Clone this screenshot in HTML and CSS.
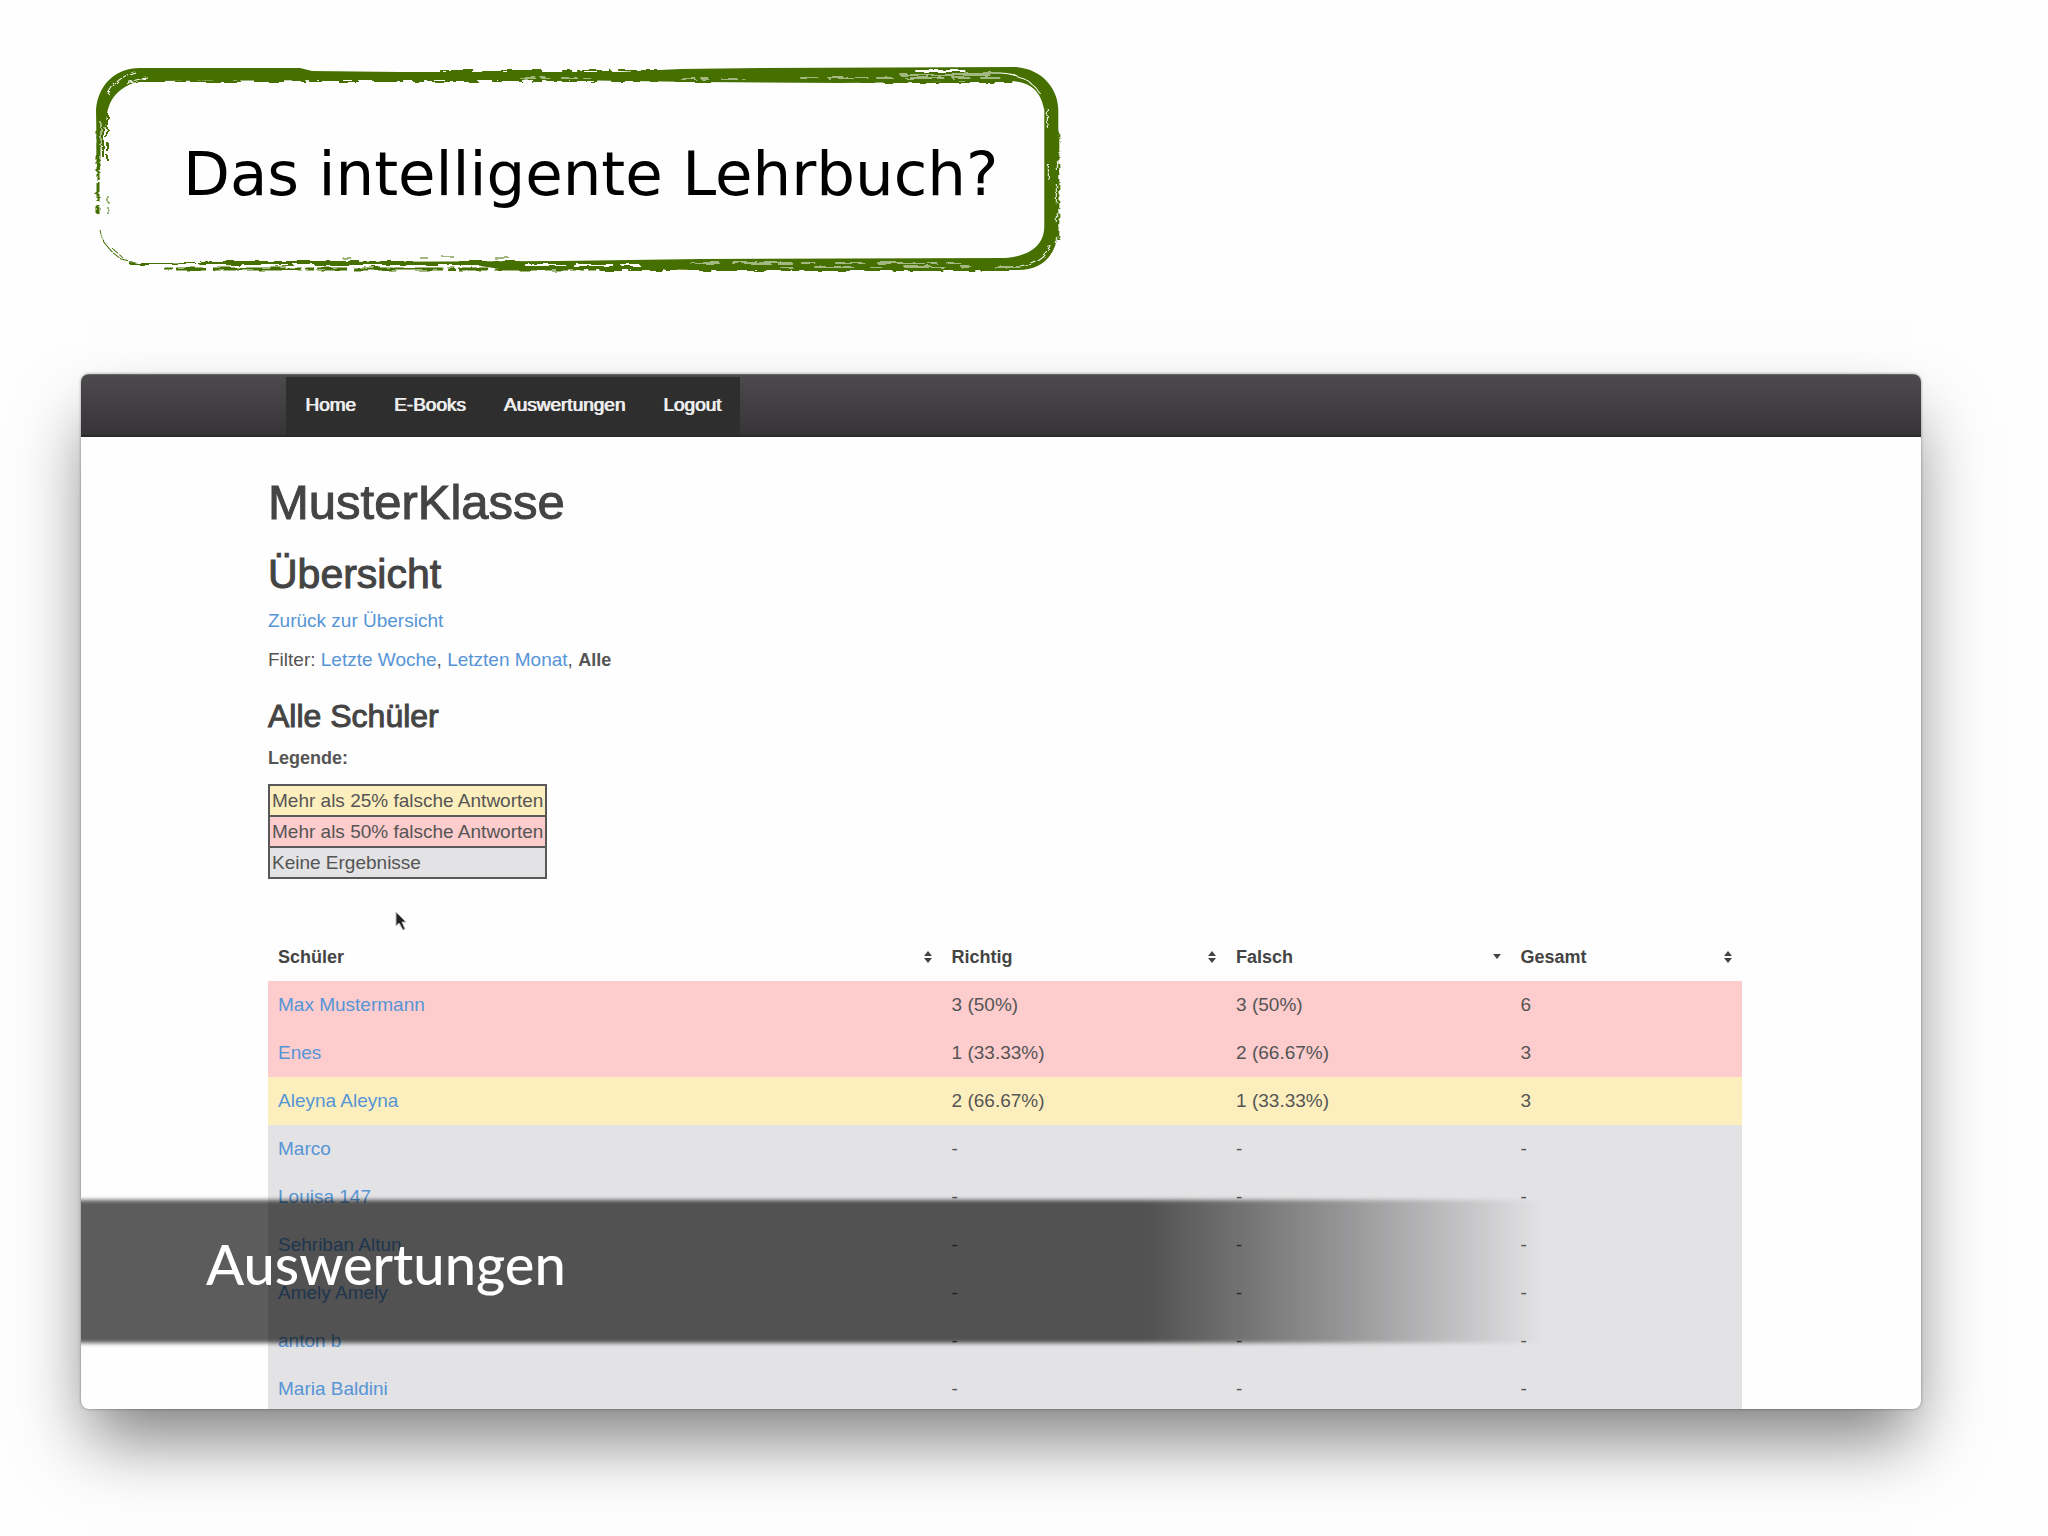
FILE: index.html
```html
<!DOCTYPE html>
<html lang="de">
<head>
  <meta charset="UTF-8">
  <meta name="viewport" content="width=device-width, initial-scale=1.0">
  <title>Das intelligente Lehrbuch?</title>
  <link rel="stylesheet" href="styles.css">
</head>
<body>
  <div class="slide">
    <!-- Slide title with brush frame -->
    <header class="title-box">
      <svg class="brush" viewBox="90 60 980 220" preserveAspectRatio="none" aria-hidden="true">
        <defs>
          <filter id="rough" x="-2%" y="-5%" width="104%" height="110%">
            <feTurbulence type="fractalNoise" baseFrequency="0.06 0.25" numOctaves="3" seed="4" result="noise"/>
            <feDisplacementMap in="SourceGraphic" in2="noise" scale="5"/>
          </filter>
        </defs>
        <path fill="#457000" d="M97 170 L96 110 C98 85 115 68 140 68 L300 68 L312 71 L400 72 L620 72 L680 69 L760 68 L1015 67 C1043 69 1058 90 1058 110 L1058 234 C1054 258 1040 270 1018 270 L700 270 L640 269 L500 269 L480 266 L300 266 L140 264 L200 263 L320 262 L560 261 L700 259 L1005 258 C1030 256 1044 245 1044 226 L1044 110 C1040 90 1030 82 1010 81 L840 83 L700 82 L560 80 L340 80 L140 81 C120 86 109 98 107 115 L105 130 L102 140 L100 170 Z"/>
        <g filter="url(#rough)" fill="none" stroke="#457000">
          <path stroke-width="2" d="M135 81 H720" stroke-dasharray="30 9 12 4 50 14"/>
          <path stroke-width="2" d="M440 71 H1010" stroke-dasharray="34 8 60 20 10 5"/>
          <path stroke-width="2" d="M860 82 H1012"/>
          <path stroke-width="3" d="M98 130 V214" stroke-dasharray="50 2 20 3"/>
          <path stroke-width="2" d="M103 125 V158 M107 105 V160" stroke-dasharray="34 3 9 4"/>
          <path stroke-width="1" d="M108 196 V218" stroke-dasharray="7 4"/>
          <path stroke-width="1" d="M100 230 C103 246 112 252 122 260 L140 264 M112 248 L123 258" stroke-dasharray="8 2 16 1"/>
          <path stroke-width="3" d="M165 269 H620" stroke-dasharray="8 3 30 6 90 4"/>
          <path stroke-width="2" d="M130 264 H700 M200 262 H520"/>
          <path stroke-width="2" d="M600 270 H1010" stroke-dasharray="22 6 50 10"/>
          <path stroke-width="1" d="M342 258 h9 M420 258 h8 M442 257 h12 M494 258 h16"/>
          <path stroke-width="2" d="M1058 130 V240" stroke-dasharray="30 3 12 4"/>
        </g>
        <g filter="url(#rough)" fill="none" stroke="#fff">
          <path stroke-width="1" d="M108 94 C113 84 121 76 135 72"/>
          <path stroke-width="1" d="M127 84 C131 80 138 79 148 78 M101 122 V168 M105 128 V150"/>
          <path stroke-width="1" d="M520 78 H600 M680 79 H745" stroke-dasharray="16 5 8 12"/>
          <path stroke-width="1" d="M800 78 H1000" stroke-dasharray="18 10 40 8"/>
          <path stroke-width="2" d="M915 71 H965"/>
          <path stroke-width="1" d="M965 73 H1000 C1020 74 1033 82 1040 94"/>
          <path stroke-width="1" d="M900 75 H990 M1047 108 V128 M1048 164 V180"/>
          <path stroke-width="1" d="M1056 160 V250" stroke-dasharray="10 14 20 8"/>
          <path stroke-width="1" d="M1050 245 C1044 258 1032 264 1020 266"/>
          <path stroke-width="2" d="M150 265 H330 M350 266 H480" stroke-dasharray="50 6 20 12"/>
          <path stroke-width="2" d="M525 265 H640" stroke-dasharray="40 8"/>
          <path stroke-width="1" d="M690 263 H960" stroke-dasharray="30 12 60 9 14 20"/>
          <path stroke-width="1" d="M780 267 H1020" stroke-dasharray="12 22 40 16"/>
        </g>
      </svg>
      <h1 class="title">Das intelligente Lehrbuch?</h1>
    </header>

    <!-- App window -->
    <main class="window">
      <nav class="navbar">
        <ul class="nav">
          <li><a href="#">Home</a></li>
          <li><a href="#">E-Books</a></li>
          <li><a href="#">Auswertungen</a></li>
          <li><a href="#">Logout</a></li>
        </ul>
      </nav>

      <div class="content">
        <h2>MusterKlasse</h2>
        <h3>Übersicht</h3>
        <p class="back"><a href="#">Zurück zur Übersicht</a></p>
        <p class="filter">Filter: <a href="#">Letzte Woche</a>, <a href="#">Letzten Monat</a>, <b>Alle</b></p>

        <h4>Alle Schüler</h4>
        <p class="legend-label"><b>Legende:</b></p>
        <table class="legend">
          <tr class="warning"><td>Mehr als 25% falsche Antworten</td></tr>
          <tr class="danger"><td>Mehr als 50% falsche Antworten</td></tr>
          <tr class="empty"><td>Keine Ergebnisse</td></tr>
        </table>

        <div class="results">
          <svg class="cursor" viewBox="0 0 12 20" aria-hidden="true">
            <path d="M1 1 L1 15 L4 12 L8 19 L10 18 L7 11 L11 11 Z" fill="#222" stroke="#bbb" stroke-width="1"/>
          </svg>
          <table class="students">
            <thead>
              <tr>
                <th class="col-name"><div class="head">Schüler<svg class="sort" viewBox="0 0 8 12"><path d="M0 5 L4 0 L8 5 Z M0 7 L4 12 L8 7 Z"/></svg></div></th>
                <th class="col-num"><div class="head">Richtig<svg class="sort" viewBox="0 0 8 12"><path d="M0 5 L4 0 L8 5 Z M0 7 L4 12 L8 7 Z"/></svg></div></th>
                <th class="col-num"><div class="head">Falsch<svg class="sort" viewBox="0 0 8 12"><path d="M0 3 L8 3 L4 8 Z"/></svg></div></th>
                <th><div class="head">Gesamt<svg class="sort" viewBox="0 0 8 12"><path d="M0 5 L4 0 L8 5 Z M0 7 L4 12 L8 7 Z"/></svg></div></th>
              </tr>
            </thead>
            <tbody>
              <tr class="danger"><td><a href="#">Max Mustermann</a></td><td>3 (50%)</td><td>3 (50%)</td><td>6</td></tr>
              <tr class="danger"><td><a href="#">Enes</a></td><td>1 (33.33%)</td><td>2 (66.67%)</td><td>3</td></tr>
              <tr class="warning"><td><a href="#">Aleyna Aleyna</a></td><td>2 (66.67%)</td><td>1 (33.33%)</td><td>3</td></tr>
              <tr class="empty"><td><a href="#">Marco</a></td><td>-</td><td>-</td><td>-</td></tr>
              <tr class="empty"><td><a href="#">Louisa 147</a></td><td>-</td><td>-</td><td>-</td></tr>
              <tr class="empty"><td><a href="#">Sehriban Altun</a></td><td>-</td><td>-</td><td>-</td></tr>
              <tr class="empty"><td><a href="#">Amely Amely</a></td><td>-</td><td>-</td><td>-</td></tr>
              <tr class="empty"><td><a href="#">anton b</a></td><td>-</td><td>-</td><td>-</td></tr>
              <tr class="empty"><td><a href="#">Maria Baldini</a></td><td>-</td><td>-</td><td>-</td></tr>
            </tbody>
          </table>
        </div>
      </div>

      <!-- Caption over the window -->
      <div class="caption">
        <div class="caption-bg"></div>
        <span class="caption-text">Auswertungen</span>
      </div>
    </main>
  </div>
</body>
</html>
```
FILE: styles.css
```css
* {
  box-sizing: border-box;
}

body {
  font-family: "Liberation Sans", Arial, sans-serif;
  font-size: 19px;
  line-height: 26px;
  color: #555;
  background: #fefefe;
  margin: 0;
}

a {
  color: #5695d6;
  text-decoration: none;
}

.slide {
  min-height: 100vh;
  padding: 60px 127px 0 81px;
}

/* Title */
.title-box {
  position: relative;
  width: fit-content;
  margin-left: 9px;
  padding: 78px 72px 70px 93px;
}

.brush {
  position: absolute;
  left: 0;
  top: 0;
  width: 100%;
  height: 100%;
}

.title {
  position: relative;
  margin: 0;
  font-family: "DejaVu Sans", Verdana, sans-serif;
  font-size: 61px;
  font-weight: normal;
  line-height: 72px;
  color: #000;
  white-space: nowrap;
}

/* Window */
.window {
  position: relative;
  aspect-ratio: 16 / 9;
  margin-top: 94px;
  background: #fefefe;
  border-radius: 8px;
  overflow: hidden;
  box-shadow: 0 38px 66px -8px rgba(0, 0, 0, 0.5), 0 0 3px rgba(0, 0, 0, 0.4);
}

.navbar {
  height: 63px;
  padding: 2px 205px 0;
  background: linear-gradient(#4c4a4c, #363436);
  border-top: 1px solid #6a696a;
  border-bottom: 2px solid #2b292b;
}

.nav {
  display: flex;
  width: fit-content;
  margin: 0;
  padding: 0 0 2px;
  list-style: none;
  background: #2f2e2f;
}

.nav a {
  display: block;
  padding: 0 19px;
  line-height: 56px;
  color: #eee;
  text-shadow: 1px 0 0 #eee;
}

.content {
  padding: 38px 179px 0 187px;
}

h2,
h3,
h4 {
  color: #444;
  font-weight: normal;
  -webkit-text-stroke: 1px #444;
}

h2 {
  margin: 0 0 22px;
  font-size: 49px;
  line-height: 54px;
}

h3 {
  margin: 0 0 11px;
  font-size: 41px;
  line-height: 46px;
}

h4 {
  margin: 25px 0 11px;
  font-size: 32px;
  line-height: 36px;
}

p {
  margin: 0 0 13px;
}

.filter b {
  font-size: 18px;
}

.legend-label {
  font-size: 18px;
}

.warning {
  background: #fdefbd;
}

.danger {
  background: #fdcccd;
}

.empty {
  background: #e3e2e4;
}

/* Legend */
.legend {
  border-collapse: collapse;
}

.legend td {
  height: 31px;
  padding: 0 2px;
  border: 2px solid #585858;
}

/* Results */
.results {
  position: relative;
  margin-top: 54px;
}

.cursor {
  position: absolute;
  left: 127px;
  top: -22px;
  width: 12px;
  height: 20px;
}

.students {
  width: 100%;
  border-collapse: collapse;
  table-layout: fixed;
}

.students th,
.students td {
  height: 48px;
  padding: 0 10px;
  text-align: left;
}

.students th {
  font-size: 18px;
  color: #444;
}

.col-name {
  width: 45.7%;
}

.col-num {
  width: 19.3%;
}

.head {
  display: flex;
  justify-content: space-between;
  align-items: center;
}

.sort {
  width: 8px;
  height: 12px;
  fill: #444;
}

/* Caption */
.caption {
  position: absolute;
  left: 0;
  right: 0;
  bottom: 66px;
  display: flex;
  align-items: center;
  height: 143px;
  padding: 0 0 16px 125px;
}

.caption-bg {
  position: absolute;
  left: -10px;
  top: 0;
  width: 80%;
  height: 100%;
  background: linear-gradient(90deg, rgba(0, 0, 0, 0.64) 73%, rgba(0, 0, 0, 0.35) 86%, rgba(0, 0, 0, 0));
  filter: blur(2px);
}

.caption-text {
  position: relative;
  font-family: Lato, sans-serif;
  font-size: 56px;
  line-height: 72px;
  color: #fff;
  font-weight: 500;
}
```
